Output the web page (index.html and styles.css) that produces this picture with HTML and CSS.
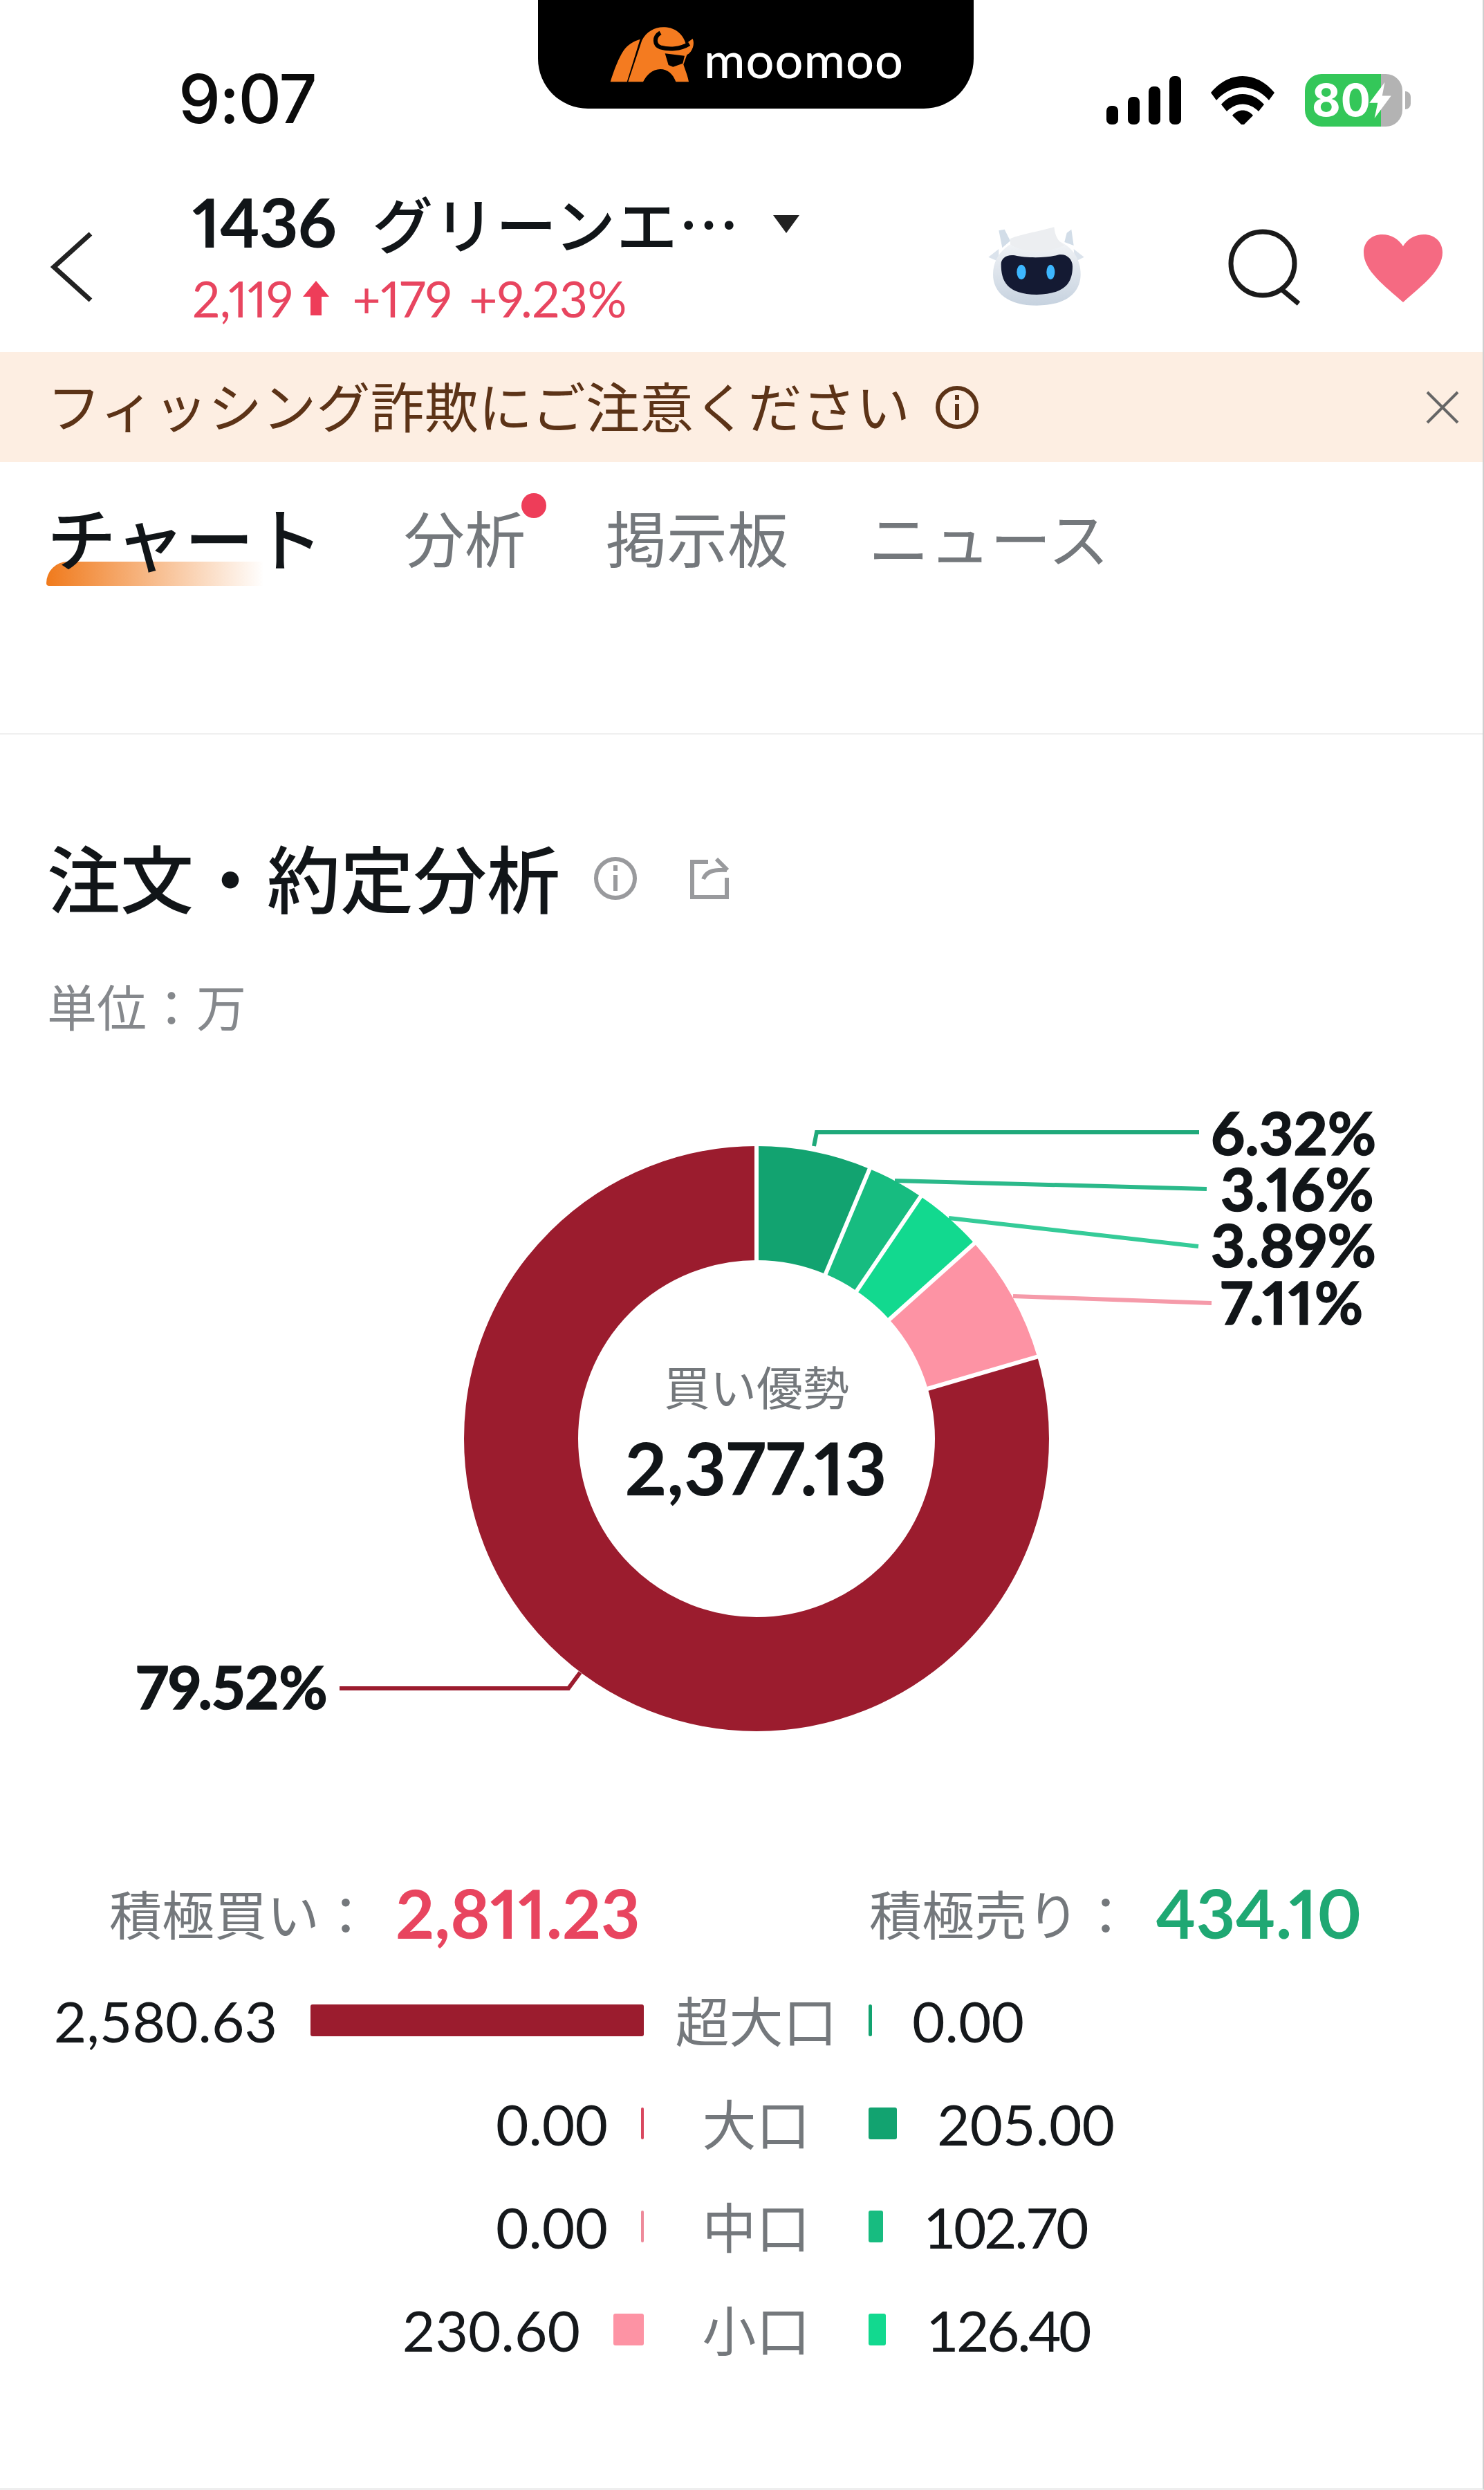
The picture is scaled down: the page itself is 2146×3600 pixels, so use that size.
FILE: index.html
```html
<!DOCTYPE html>
<html lang="ja">
<head>
    <meta charset="UTF-8">
    <title>注文・約定分析</title>
    <link rel="stylesheet" href="styles.css">
</head>
<body>

<div class="status-bar">
    <div class="status-time">9:07</div>
    <div class="notch">
        <svg class="notch-logo" viewBox="0 0 540 360">
            <path fill="#f47b20" d="M68 295C85 240 105 190 125 160C140 135 170 118 197 110L140 295Z"/>
            <path fill="#f47b20" d="M145 295L205 115C225 75 265 55 305 58C350 60 385 90 395 130L425 108C435 130 425 165 400 178L385 220C395 250 405 275 408 295L352 295C340 260 315 240 285 240C250 240 225 265 210 295Z"/>
            <path fill="none" stroke="#000" stroke-width="18" d="M285 82C255 100 258 135 285 145C320 155 370 155 410 130"/>
            <path fill="#000" d="M305 172L390 182L382 215L340 230L320 222Z"/>
        </svg>
        <span class="notch-name">moomoo</span>
    </div>
    <div class="status-icons">
        <svg class="icon-signal" viewBox="0 0 108 70">
            <rect x="0" y="43" width="17" height="27" rx="7"/>
            <rect x="31" y="30" width="17" height="40" rx="7"/>
            <rect x="61" y="15" width="17" height="55" rx="7"/>
            <rect x="91" y="0" width="17" height="70" rx="7"/>
        </svg>
        <svg class="icon-wifi" viewBox="0 0 92 70">
            <path d="M0 24C26 -8 66 -8 92 24L84 35C62 10 30 10 8 35Z"/>
            <path d="M15 41C33 21 59 21 77 41L69 51C55 37 37 37 23 51Z"/>
            <path d="M31 57C39 47 53 47 61 57L46 72Z"/>
        </svg>
        <div class="battery">
            <div class="battery-shell">
                <span class="battery-level">80</span>
                <svg class="battery-bolt" viewBox="0 0 34 56">
                    <path d="M24 0L0 32H13L8 56L34 21H20Z"/>
                </svg>
            </div>
            <div class="battery-nub"></div>
        </div>
    </div>
</div>

<div class="nav-bar">
    <svg class="icon-back" viewBox="0 0 62 102">
        <path d="M58 3L5 51L58 99"/>
    </svg>
    <div class="stock">
        <div class="stock-name">
            <span class="stock-code">1436</span>
            <span class="stock-title">グリーンエ…</span>
            <span class="stock-caret"></span>
        </div>
        <div class="stock-quote">
            <span>2,119</span>
            <svg class="quote-arrow" viewBox="0 0 38 50">
                <path d="M19 0L38 23H27V50H11V23H0Z"/>
            </svg>
            <span class="quote-change">+179</span>
            <span class="quote-rate">+9.23%</span>
        </div>
    </div>
    <svg class="icon-robot" viewBox="0 0 540 450">
        <defs>
            <linearGradient id="robotBody" x1="0" y1="0" x2="0" y2="1">
                <stop offset="0" stop-color="#f5f6f8"/>
                <stop offset="1" stop-color="#c6d2df"/>
            </linearGradient>
        </defs>
        <path fill="#d2dde8" d="M100 70L125 65L150 115L115 145Z"/>
        <path fill="#d2dde8" d="M395 80L415 65L425 135L385 120Z"/>
        <path fill="#dbe3ec" d="M55 185L100 150L100 205Z"/>
        <path fill="#dbe3ec" d="M470 185L425 150L430 205Z"/>
        <path fill="url(#robotBody)" d="M75 260C75 170 150 100 270 100C390 100 455 170 455 260C455 340 390 395 265 395C140 395 75 340 75 260Z"/>
        <path fill="#eceef1" d="M150 105C200 85 270 75 340 55C345 90 350 110 385 135C300 170 210 170 150 130Z"/>
        <path fill="#141a33" d="M110 215C110 190 135 172 170 178C220 190 310 190 360 175C395 170 420 195 420 225C420 290 395 345 265 348C135 345 110 290 110 215Z"/>
        <ellipse cx="198" cy="250" rx="20" ry="32" fill="#3db7ff"/>
        <ellipse cx="325" cy="250" rx="18" ry="32" fill="#3db7ff"/>
    </svg>
    <svg class="icon-search" viewBox="0 0 110 112">
        <circle cx="50" cy="50" r="46"/>
        <path d="M78 88L102 108"/>
    </svg>
    <svg class="icon-heart" viewBox="0 0 114 98">
        <path d="M57 98C30 74 0 52 0 26C0 10 12 0 27 0C40 0 51 7 57 17C63 7 74 0 87 0C102 0 114 10 114 26C114 52 84 74 57 98Z"/>
    </svg>
</div>

<div class="notice">
    <span class="notice-text">フィッシング詐欺にご注意ください</span>
    <svg class="notice-info" viewBox="0 0 64 64">
        <circle cx="32" cy="32" r="28"/>
        <path d="M32 27V50M32 14V21"/>
    </svg>
    <svg class="notice-close" viewBox="0 0 48 48">
        <path d="M2 2L46 46M46 2L2 46"/>
    </svg>
</div>

<div class="tabs">
    <div class="tab tab-active">チャート</div>
    <div class="tab tab-dot">分析</div>
    <div class="tab">掲示板</div>
    <div class="tab">ニュース</div>
</div>

<div class="section-head">
    <h2 class="section-title">注文・約定分析</h2>
    <svg class="head-info" viewBox="0 0 64 64">
        <circle cx="32" cy="32" r="28"/>
        <path d="M32 27V50M32 13V21"/>
    </svg>
    <svg class="head-share" viewBox="0 0 60 60">
        <path d="M28 6H5V57H55V29"/>
        <path d="M21 31C25 21 33 17 55 18M40 2L56 18"/>
    </svg>
</div>
<div class="unit">単位：万</div>

<!-- 座標はスクリーンショットのまま -->
<svg class="donut" viewBox="0 1540 2146 1020">
    <g class="leaders">
        <path stroke="#1fa97a" d="M1177 1657L1181 1637H1734"/>
        <path stroke="#2bb98a" d="M1294 1707L1745 1719"/>
        <path stroke="#35cb98" d="M1372 1761L1733 1802"/>
        <path stroke="#f59aa9" d="M1465 1874L1752 1884"/>
        <path stroke="#9b1c2e" d="M839 2418L822 2441H491"/>
    </g>
    <g class="rings" transform="rotate(-90 1094 2080)">
        <circle class="seg" cx="1094" cy="2080" r="340.5" pathLength="100" stroke="#9b1c2e" stroke-dasharray="79.52 20.48" stroke-dashoffset="-20.48"/>
        <circle class="seg" cx="1094" cy="2080" r="340.5" pathLength="100" stroke="#12a370" stroke-dasharray="6.32 93.68"/>
        <circle class="seg" cx="1094" cy="2080" r="340.5" pathLength="100" stroke="#17bc80" stroke-dasharray="3.16 96.84" stroke-dashoffset="-6.32"/>
        <circle class="seg" cx="1094" cy="2080" r="340.5" pathLength="100" stroke="#12d98f" stroke-dasharray="3.89 96.11" stroke-dashoffset="-9.48"/>
        <circle class="seg" cx="1094" cy="2080" r="340.5" pathLength="100" stroke="#fd93a4" stroke-dasharray="7.11 92.89" stroke-dashoffset="-13.37"/>
    </g>
    <g class="gaps" transform="translate(1094 2080)">
        <path d="M0 -250V-430"/>
        <path d="M96.7 -230.6L166.3 -396.6"/>
        <path d="M140.3 -206.9L241.3 -355.9"/>
        <path d="M186.1 -166.9L320.1 -287.1"/>
        <path d="M240 -70L412.8 -120.4"/>
    </g>
    <text class="pct" x="1751" y="1670">6.32%</text>
    <text class="pct" x="1765" y="1751">3.16%</text>
    <text class="pct" x="1751" y="1832">3.89%</text>
    <text class="pct pct-wide" x="1765" y="1915">7.11%</text>
    <text class="pct" x="197" y="2471">79.52%</text>
    <text class="donut-label" x="1094" y="2032">買い優勢</text>
    <text class="donut-value" x="1093" y="2162">2,377.13</text>
</svg>

<div class="summary">
    <div class="summary-side">
        <span class="summary-label">積極買い：</span>
        <span class="summary-num num-buy">2,811.23</span>
    </div>
    <div class="summary-side">
        <span class="summary-label">積極売り：</span>
        <span class="summary-num num-sell">434.10</span>
    </div>
</div>

<div class="flow">
    <div class="flow-row">
        <div class="flow-buy"><span class="val">2,580.63</span><span class="bar bar-red1" style="width: 482px"></span></div>
        <div class="flow-name">超大口</div>
        <div class="flow-sell"><span class="bar bar-green1" style="width: 5px"></span><span class="val">0.00</span></div>
    </div>
    <div class="flow-row">
        <div class="flow-buy"><span class="val">0.00</span><span class="bar bar-red2" style="width: 4px"></span></div>
        <div class="flow-name">大口</div>
        <div class="flow-sell"><span class="bar bar-green1" style="width: 41px"></span><span class="val">205.00</span></div>
    </div>
    <div class="flow-row">
        <div class="flow-buy"><span class="val">0.00</span><span class="bar bar-red3" style="width: 4px"></span></div>
        <div class="flow-name">中口</div>
        <div class="flow-sell"><span class="bar bar-green2" style="width: 21px"></span><span class="val val-tight">102.70</span></div>
    </div>
    <div class="flow-row">
        <div class="flow-buy"><span class="val">230.60</span><span class="bar bar-pink" style="width: 44px"></span></div>
        <div class="flow-name">小口</div>
        <div class="flow-sell"><span class="bar bar-green3" style="width: 25px"></span><span class="val val-tight">126.40</span></div>
    </div>
</div>

</body>
</html>
```

FILE: styles.css
```css
* {
    box-sizing: border-box;
}

html, body {
    margin: 0;
    padding: 0;
}

body {
    width: 2146px;
    height: 3600px;
    overflow: hidden;
    background: #fff;
    color: #111518;
    font-family: "Lato", "Noto Sans CJK JP", sans-serif;
    font-variant-numeric: proportional-nums;
    border-right: 2px solid #cfcfcf;
    border-bottom: 3px solid #eee;
}

/* status bar */
.status-bar {
    height: 250px;
    display: grid;
    grid-template-columns: 778px 630px 1fr;
    align-items: start;
}

.status-time {
    padding: 87px 0 0 258px;
    font-family: "Inter", sans-serif;
    font-size: 97px;
    line-height: 112px;
    font-weight: 500;
    letter-spacing: -2px;
    color: #0b0b0b;
}

.notch {
    height: 157px;
    background: #000;
    border-radius: 0 0 72px 72px;
    display: flex;
    align-items: flex-start;
    padding: 20px 0 0 82px;
}

.notch-logo {
    width: 180px;
    height: 120px;
    flex: none;
}

.notch-name {
    margin: 27px 0 0 -22px;
    color: #fff;
    font-size: 72px;
    line-height: 76px;
    font-weight: 500;
    letter-spacing: 1px;
}

.status-icons {
    display: flex;
    align-items: flex-start;
    padding: 110px 0 0 192px;
}

.icon-signal {
    width: 108px;
    height: 70px;
    fill: #000;
}

.icon-wifi {
    width: 92px;
    height: 70px;
    margin-left: 43px;
    fill: #000;
}

.battery {
    display: flex;
    align-items: center;
    margin: -3px 0 0 44px;
}

.battery-shell {
    width: 141px;
    height: 76px;
    border-radius: 24px;
    background: linear-gradient(90deg, #34c759 78%, #b3b3b3 78%);
    display: flex;
    align-items: center;
    padding-left: 10px;
}

.battery-level {
    font-family: "Inter", sans-serif;
    font-size: 64px;
    font-weight: 700;
    line-height: 76px;
    color: #fff;
}

.battery-bolt {
    width: 32px;
    height: 52px;
    margin-left: -2px;
    fill: #fff;
}

.battery-nub {
    width: 8px;
    height: 26px;
    margin-left: 4px;
    border-radius: 0 13px 13px 0;
    background: #b3b3b3;
}

/* nav */
.nav-bar {
    height: 259px;
    display: flex;
    align-items: flex-start;
    padding-left: 73px;
}

.icon-back {
    width: 62px;
    height: 102px;
    margin-top: 85px;
    fill: none;
    stroke: #222;
    stroke-width: 7;
}

.stock {
    margin: 20px 0 0 143px;
    width: 1153px;
    flex: none;
}

.stock-name {
    display: flex;
    align-items: center;
    height: 100px;
}

.stock-code {
    font-size: 98px;
    font-weight: 700;
    letter-spacing: -1px;
}

.stock-title {
    margin-left: 52px;
    font-family: "Noto Sans CJK JP", sans-serif;
    font-size: 88px;
    font-weight: 500;
    letter-spacing: 1.5px;
}

.stock-caret {
    width: 0;
    height: 0;
    margin: 8px 0 0 47px;
    border-left: 19px solid transparent;
    border-right: 19px solid transparent;
    border-top: 26px solid #222;
}

.stock-quote {
    display: flex;
    align-items: center;
    height: 70px;
    margin-top: 26px;
    font-size: 71px;
    letter-spacing: -0.5px;
    color: #e8455f;
}

.quote-arrow {
    width: 38px;
    height: 50px;
    margin-left: 14px;
    fill: #ee3d59;
}

.quote-change {
    margin-left: 34px;
}

.quote-rate {
    margin-left: 25px;
}

.icon-robot {
    width: 180px;
    height: 150px;
    margin: 60px 0 0 -20px;
    flex: none;
}

.icon-search {
    width: 110px;
    height: 112px;
    margin: 81px 0 0 185px;
    fill: none;
    stroke: #1a1a1a;
    stroke-width: 7;
    flex: none;
}

.icon-heart {
    width: 114px;
    height: 98px;
    margin: 89px 0 0 86px;
    fill: #f56a82;
    flex: none;
}

/* notice */
.notice {
    height: 159px;
    background: #fdeee2;
    display: flex;
    align-items: center;
    padding-left: 68px;
    color: #5c3317;
}

.notice-text {
    margin-top: -8px;
    font-size: 78px;
    letter-spacing: 0.2px;
    font-family: "Noto Sans CJK JP", sans-serif;
}

.notice-info {
    width: 64px;
    height: 64px;
    margin-left: 36px;
    fill: none;
    stroke: #5c3317;
    stroke-width: 6;
}

.notice-close {
    width: 48px;
    height: 48px;
    margin-left: auto;
    margin-right: 34px;
    fill: none;
    stroke: #666;
    stroke-width: 4;
}

/* tabs */
.tabs {
    height: 394px;
    display: flex;
    align-items: flex-start;
    padding: 42px 0 0 68px;
    border-bottom: 2px solid #f0f0f0;
}

.tab {
    margin-right: 116px;
    font-family: "Noto Sans CJK JP", sans-serif;
    font-size: 88px;
    line-height: 130px;
    color: #74787c;
    position: relative;
}

.tab-active {
    margin-right: 117px;
    font-size: 100px;
    font-weight: 500;
    color: #111518;
}

.tab-active::before {
    content: "";
    position: absolute;
    left: -1px;
    top: 102px;
    width: 315px;
    height: 35px;
    border-radius: 32px 0 0 4px;
    background: linear-gradient(90deg, #f07a1c, rgba(240, 122, 28, 0));
    z-index: -1;
}

.tab-dot::after {
    content: "";
    position: absolute;
    right: -30px;
    top: 3px;
    width: 36px;
    height: 36px;
    border-radius: 50%;
    background: #ee3d59;
}

/* section */
.section-head {
    display: flex;
    align-items: center;
    height: 130px;
    margin-top: 143px;
    padding-left: 68px;
}

.section-title {
    margin: -8px 0 0;
    font-family: "Noto Sans CJK JP", sans-serif;
    font-size: 106px;
    line-height: 130px;
    font-weight: 500;
    color: #111518;
}

.head-info {
    width: 64px;
    height: 64px;
    margin-left: 48px;
    fill: none;
    stroke: #999a9d;
    stroke-width: 6;
}

.head-share {
    width: 60px;
    height: 60px;
    margin-left: 74px;
    fill: none;
    stroke: #999a9d;
    stroke-width: 6;
}

.unit {
    height: 100px;
    margin-top: 68px;
    padding-left: 68px;
    font-family: "Noto Sans CJK JP", sans-serif;
    font-size: 72px;
    line-height: 100px;
    color: #85888c;
}

/* donut */
.donut {
    display: block;
    width: 2146px;
    height: 1020px;
    margin-top: 37px;
}

.seg {
    fill: none;
    stroke-width: 165;
}

.leaders path {
    fill: none;
    stroke-width: 6;
}

.gaps path {
    fill: none;
    stroke: #fff;
    stroke-width: 6;
}

.pct {
    font-size: 86px;
    font-weight: 700;
    fill: #111518;
    stroke: #111518;
    stroke-width: 1.5;
}

.pct-wide {
    letter-spacing: 2px;
}

.donut-label {
    font-family: "Noto Sans CJK JP", sans-serif;
    font-size: 67px;
    fill: #74787c;
    text-anchor: middle;
}

.donut-value {
    font-size: 106px;
    font-weight: 700;
    fill: #111518;
    text-anchor: middle;
}

/* summary */
.summary {
    display: grid;
    grid-template-columns: 1099px 1fr;
    height: 110px;
    margin-top: 146px;
    padding-left: 158px;
}

.summary-side {
    display: flex;
    align-items: center;
}

.summary-label {
    font-family: "Noto Sans CJK JP", sans-serif;
    font-size: 76px;
    color: #74787c;
}

.summary-num {
    margin-left: 34px;
    font-size: 98px;
    font-weight: 700;
}

.num-buy {
    color: #e8455f;
}

.num-sell {
    color: #1fa873;
}

/* flow rows */
.flow {
    margin-top: 30px;
}

.flow-row {
    display: grid;
    grid-template-columns: 931px 325px 1fr;
    height: 149px;
    align-items: center;
}

.flow-buy, .flow-sell {
    display: flex;
    align-items: center;
}

.flow-buy {
    justify-content: flex-end;
    gap: 48px;
}

.flow-sell {
    gap: 58px;
}

.flow-name {
    margin-top: -4px;
    text-align: center;
    font-family: "Noto Sans CJK JP", sans-serif;
    font-size: 78px;
    color: #74787c;
}

.val {
    font-size: 82px;
    font-variant-numeric: tabular-nums;
    color: #15181b;
}

.val-tight {
    letter-spacing: -3.5px;
}

.bar {
    height: 46px;
    border-radius: 3px;
}

.bar-red1 { background: #9b1c2e; }
.bar-red2 { background: #d9485f; }
.bar-red3 { background: #ee8a9a; }
.bar-pink { background: #fd93a4; }
.bar-green1 { background: #12a370; }
.bar-green2 { background: #17bc80; }
.bar-green3 { background: #12d98f; }
```
